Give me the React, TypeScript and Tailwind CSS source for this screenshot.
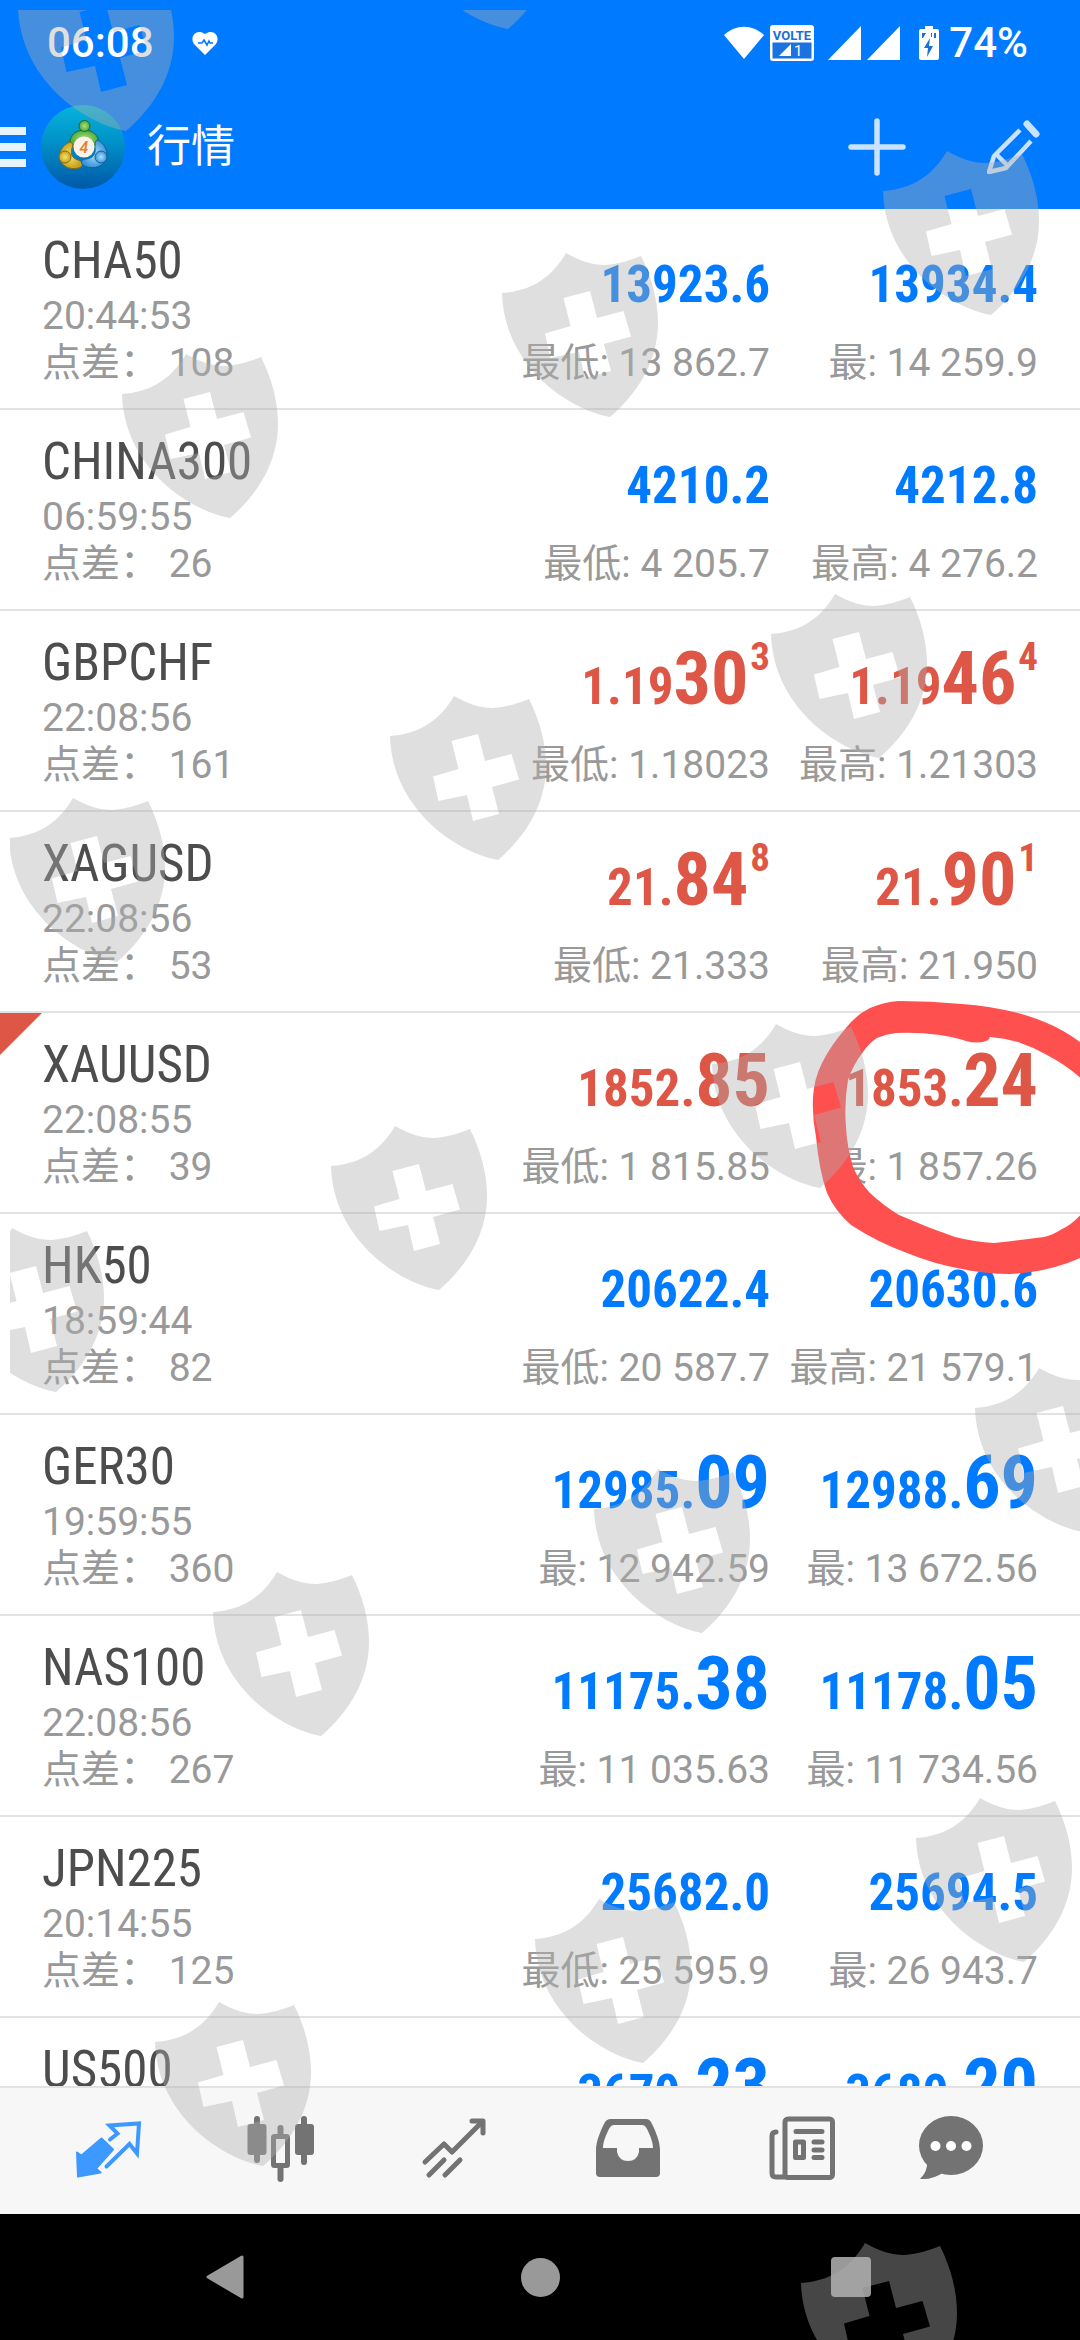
import type { ReactNode } from 'react';

type Price = { small: string; big?: string; sup?: string };

type Quote = {
  symbol: string;
  time?: string;
  spread?: string;
  bid: Price;
  ask: Price;
  low?: string;
  high?: string;
  down?: boolean;
  flagged?: boolean;
};

const quotes: Quote[] = [
  { symbol: 'CHA50', time: '20:44:53', spread: '108', bid: { small: '13923.6' }, ask: { small: '13934.4' }, low: '最低: 13 862.7', high: '最: 14 259.9' },
  { symbol: 'CHINA300', time: '06:59:55', spread: '26', bid: { small: '4210.2' }, ask: { small: '4212.8' }, low: '最低: 4 205.7', high: '最高: 4 276.2' },
  { symbol: 'GBPCHF', time: '22:08:56', spread: '161', bid: { small: '1.19', big: '30', sup: '3' }, ask: { small: '1.19', big: '46', sup: '4' }, low: '最低: 1.18023', high: '最高: 1.21303', down: true },
  { symbol: 'XAGUSD', time: '22:08:56', spread: '53', bid: { small: '21.', big: '84', sup: '8' }, ask: { small: '21.', big: '90', sup: '1' }, low: '最低: 21.333', high: '最高: 21.950', down: true },
  { symbol: 'XAUUSD', time: '22:08:55', spread: '39', bid: { small: '1852.', big: '85' }, ask: { small: '1853.', big: '24' }, low: '最低: 1 815.85', high: '最: 1 857.26', down: true, flagged: true },
  { symbol: 'HK50', time: '18:59:44', spread: '82', bid: { small: '20622.4' }, ask: { small: '20630.6' }, low: '最低: 20 587.7', high: '最高: 21 579.1' },
  { symbol: 'GER30', time: '19:59:55', spread: '360', bid: { small: '12985.', big: '09' }, ask: { small: '12988.', big: '69' }, low: '最: 12 942.59', high: '最: 13 672.56' },
  { symbol: 'NAS100', time: '22:08:56', spread: '267', bid: { small: '11175.', big: '38' }, ask: { small: '11178.', big: '05' }, low: '最: 11 035.63', high: '最: 11 734.56' },
  { symbol: 'JPN225', time: '20:14:55', spread: '125', bid: { small: '25682.0' }, ask: { small: '25694.5' }, low: '最低: 25 595.9', high: '最: 26 943.7' },
  { symbol: 'US500', bid: { small: '3679.', big: '23' }, ask: { small: '3680.', big: '20' } },
];

const shields = [
  [18, -33], [400, -135], [883, 151], [502, 253], [122, 354], [771, 594],
  [390, 696], [9, 798], [712, 1024], [331, 1126], [-52, 1228], [975, 1368],
  [594, 1469], [213, 1572], [535, 1899], [916, 1798], [155, 2002], [801, 2243],
];

function StatusBar() {
  return (
    <div className="flex h-[84px] items-center pl-[47px] pr-[52px] pt-[2px] text-[42px] font-medium leading-[48px]">
      <span>06:08</span>
      <svg className="ml-[38px] h-[24px] w-[26px]" viewBox="0 0 26 24" aria-hidden="true">
        <path d="M13 24 2 13C-3 5 5-3 13 3c8-6 16 2 11 10Z" fill="#fff" />
        <path d="M6 12h4l2-3 3 5 2-4 1 2h3" fill="none" stroke="#007aff" strokeWidth="1.6" />
      </svg>
      <div className="ml-auto flex items-center">
        <svg className="h-[34px] w-[40px]" viewBox="0 0 40 34" aria-hidden="true">
          <path d="M20 33 0 9C12-2 28-2 40 9Z" fill="#fff" />
        </svg>
        <svg className="ml-[6px] h-[36px] w-[44px]" viewBox="0 0 44 36" aria-hidden="true">
          <rect width="44" height="36" rx="3" fill="#fff" />
          <rect x="2.5" y="17.5" width="39" height="16" fill="#1a73e0" />
          <text x="22" y="14.5" textAnchor="middle" fontSize="13" fontWeight="700" fill="#1a6fd8">VOLTE</text>
          <path d="M9 31h12V19Z" fill="#fff" />
          <text x="24" y="31" fontSize="15" fontWeight="400" fill="#fff">1</text>
        </svg>
        <svg className="ml-[14px] h-[34px] w-[33px]" viewBox="0 0 33 34" aria-hidden="true">
          <path d="M0 34h33V0Z" fill="#fff" />
        </svg>
        <svg className="ml-[6px] h-[34px] w-[33px]" viewBox="0 0 33 34" aria-hidden="true">
          <path d="M0 34h33V0Z" fill="#fff" />
        </svg>
        <svg className="ml-[19px] h-[34px] w-[20px]" viewBox="0 0 20 34" aria-hidden="true">
          <path d="M6 0h8v3h4a2 2 0 0 1 2 2v27a2 2 0 0 1-2 2H2a2 2 0 0 1-2-2V5a2 2 0 0 1 2-2h4Z" fill="#fff" />
          <path d="M3 7h4l-3 5H3ZM12 7h1v4h-1ZM15 7h2v5h-2Z" fill="#1a6fd8" />
          <path d="M11 12 5 22h4l-1 9 6-11h-4Z" fill="#1a6fd8" />
        </svg>
        <span className="ml-[10px]">74%</span>
      </div>
    </div>
  );
}

function Logo() {
  return (
    <svg className="ml-[15px] h-[84px] w-[84px]" viewBox="0 0 84 84" aria-hidden="true">
      <defs>
        <linearGradient id="disc" x1="0" y1="0" x2="0" y2="1">
          <stop offset="0" stopColor="#08b4dc" />
          <stop offset="0.45" stopColor="#0090c8" />
          <stop offset="1" stopColor="#0058a8" />
        </linearGradient>
        <radialGradient id="green"><stop offset="0" stopColor="#b4e07c" /><stop offset="1" stopColor="#4aa83c" /></radialGradient>
        <radialGradient id="gold"><stop offset="0" stopColor="#f8e468" /><stop offset="1" stopColor="#c8a020" /></radialGradient>
        <radialGradient id="sky"><stop offset="0" stopColor="#a8e2ff" /><stop offset="1" stopColor="#3c94d8" /></radialGradient>
      </defs>
      <circle cx="42" cy="42" r="42" fill="url(#disc)" />
      <path d="M29 38c0-8 6-13 14-13s15 5 15 14c-1 5-5 5-7 2-4-6-12-6-16 0-2 3-6 1-6-3Z" fill="url(#green)" stroke="#1f6a24" />
      <path d="M29 37c-8 3-13 12-9 20 4 7 14 8 20 5 3-3 0-6-3-7-6-2-8-6-6-12 1-3 1-5-2-6Z" fill="url(#gold)" stroke="#8a6a10" />
      <path d="M57 35c7 4 11 12 8 20-4 8-16 10-23 5-3-3-1-6 3-6 7-1 10-5 9-11 0-4 0-8 3-8Z" fill="url(#sky)" stroke="#13609c" />
      <circle cx="43.5" cy="21" r="5.5" fill="url(#green)" stroke="#1f6a24" />
      <circle cx="24" cy="52" r="6" fill="url(#gold)" stroke="#8a6a10" />
      <circle cx="60" cy="52" r="6" fill="url(#sky)" stroke="#13609c" />
      <circle cx="43" cy="42" r="10.5" fill="#fbf3ea" />
      <text x="43" y="48" textAnchor="middle" fontSize="16" fontWeight="500" fontStyle="italic" fill="#ee7a2c">4</text>
    </svg>
  );
}

function Toolbar() {
  return (
    <div className="flex h-[125px] items-center pr-[40px]">
      <button type="button" aria-label="菜单" className="flex flex-col gap-[8px]">
        <span className="h-[8px] w-[26px] bg-[#e6f4ff]" />
        <span className="h-[8px] w-[26px] bg-[#e6f4ff]" />
        <span className="h-[8px] w-[26px] bg-[#e6f4ff]" />
      </button>
      <Logo />
      <h1 className="ml-[22px] text-[44px] leading-[64px]">行情</h1>
      <button type="button" aria-label="添加" className="ml-auto">
        <svg className="block h-[58px] w-[58px]" viewBox="0 0 58 58" fill="none" stroke="#c9e3ff" strokeWidth="5.5" strokeLinecap="round">
          <path d="M29 3v52M3 29h52" />
        </svg>
      </button>
      <button type="button" aria-label="编辑" className="ml-[81px]">
        <svg className="block h-[54px] w-[53px]" viewBox="0 0 53 54" fill="none" stroke="#c9e3ff" strokeWidth="4.5" strokeLinejoin="round">
          <path d="m40 4 9 10" strokeWidth="7" strokeLinecap="round" />
          <path d="M33 10 7 36 2 52l17-4 25-27" />
          <path d="m10 35 10 10" />
        </svg>
      </button>
    </div>
  );
}

function PriceText({ price, down }: { price: Price; down?: boolean }) {
  return (
    <div className={`mb-1 text-[51px] font-bold leading-[100px] whitespace-nowrap font-['Roboto_Condensed','Roboto',sans-serif] ${down ? 'text-[#de5646]' : 'text-[#007aff]'}`}>
      {price.small}
      {price.big && <span className="text-[74px] leading-none">{price.big}</span>}
      {price.sup && <span className="ml-[2px] align-[34px] text-[39px] leading-none">{price.sup}</span>}
    </div>
  );
}

function QuoteRow({ quote }: { quote: Quote }) {
  return (
    <li className="relative grid h-[201px] shrink-0 grid-cols-[1fr_268px_268px] border-b-2 border-[#e2e2e2] px-[42px]">
      {quote.flagged && (
        <svg className="absolute left-0 top-0 h-[42px] w-[42px]" viewBox="0 0 42 42" aria-hidden="true">
          <path d="M0 0h42L0 42Z" fill="#de5646" />
        </svg>
      )}
      <div className="pt-5 text-[39px] text-[#999]">
        <h2 className="text-[51px] leading-[64px] text-[#4d4d4d] font-['Roboto_Condensed','Roboto',sans-serif]">{quote.symbol}</h2>
        {quote.time && <p className="leading-[46px]">{quote.time}</p>}
        {quote.spread && <p className="leading-[48px]">点差： {quote.spread}</p>}
      </div>
      <div className="flex flex-col items-end pt-[26px]">
        <PriceText price={quote.bid} down={quote.down} />
        {quote.low && <p className="whitespace-nowrap text-[39px] leading-[48px] text-[#999]">{quote.low}</p>}
      </div>
      <div className="flex flex-col items-end pt-[26px]">
        <PriceText price={quote.ask} down={quote.down} />
        {quote.high && <p className="whitespace-nowrap text-[39px] leading-[48px] text-[#999]">{quote.high}</p>}
      </div>
    </li>
  );
}

function TabButton({ label, children }: { label: string; children: ReactNode }) {
  return (
    <button type="button" aria-label={label} className="flex items-center justify-center">
      <svg className="h-[72px] w-[72px]" viewBox="0 0 72 72" fill="none" strokeLinecap="round" strokeLinejoin="round">
        {children}
      </svg>
    </button>
  );
}

function TabBar() {
  return (
    <nav className="grid h-[128px] shrink-0 grid-cols-[173fr_173fr_173fr_173fr_173fr_128fr] border-t-2 border-[#e2e2e2] bg-[#f7f7f7] pl-[22px] pr-[65px]">
      <TabButton label="行情">
        <path d="M4 37.500l4.500 3L28.500 23.500 40 34.500 23 53.500l4.500 4L5 61.500Z" fill="#3d99ff" stroke="#3d99ff" strokeWidth="2" />
        <path d="m37 24.500 7.500-6L36.500 10.500 66 8.500 64 38.500 56.500 29 33.500 51.500" stroke="#3d99ff" strokeWidth="4" strokeLinejoin="miter" />
      </TabButton>
      <TabButton label="图表">
        <path d="M11 4v41M58 4v43" stroke="#737373" strokeWidth="6" />
        <rect x="1.5" y="9" width="19" height="31" rx="3" fill="#737373" />
        <rect x="49" y="9" width="19" height="31" rx="3" fill="#737373" />
        <path d="M34.500 13v51" stroke="#737373" strokeWidth="6" />
        <rect x="27.5" y="21.5" width="14" height="29" rx="1" fill="#f7f7f7" stroke="#737373" strokeWidth="5" />
      </TabButton>
      <TabButton label="交易">
        <path d="M6 47 25 29l8 8L63 7M53 6h11v12M10 60l15-15M26 60l15-15" stroke="#737373" strokeWidth="5" />
      </TabButton>
      <TabButton label="历史">
        <path
          fillRule="evenodd"
          fill="#737373"
          d="M19 4h35q4 0 6 5c4 8 8 18 8 26v23q0 4-4 4H8q-4 0-4-4V35c0-8 4-18 8-26q2-5 7-5ZM22 10q-3 0-5 4c-3 6-6 13-6 19h14v4q2 9 11 9t11-9v-4h14c0-6-3-13-6-19q-2-4-5-4Z"
        />
      </TabButton>
      <TabButton label="新闻">
        <rect x="20" y="4" width="47.5" height="58.5" rx="3" stroke="#737373" strokeWidth="5" />
        <path d="M11 17q-4 0-4 4v37q0 4 4 4h9" stroke="#737373" strokeWidth="5" />
        <path d="M31 16.500h26M49 27h8M49 35h8M49 42.500h8" stroke="#737373" strokeWidth="5" />
        <rect x="30.5" y="27" width="8" height="15.5" stroke="#737373" strokeWidth="5" />
      </TabButton>
      <TabButton label="聊天">
        <ellipse cx="36" cy="30.5" rx="32" ry="29.5" fill="#737373" />
        <path d="M12 47q1 9-7 17 13 1 24-7Z" fill="#737373" />
        <circle cx="20.5" cy="31" r="5" fill="#fff" />
        <circle cx="36" cy="31" r="5" fill="#fff" />
        <circle cx="51.5" cy="31" r="5" fill="#fff" />
      </TabButton>
    </nav>
  );
}

function SystemNav() {
  return (
    <div className="flex h-[126px] shrink-0 items-center justify-between bg-black px-[185px]">
      <button type="button" aria-label="返回" className="flex w-[80px] justify-center">
        <svg className="h-[44px] w-[40px]" viewBox="0 0 40 44">
          <path d="M3 22 37 2v40Z" fill="#999" stroke="#999" strokeWidth="3" strokeLinejoin="round" />
        </svg>
      </button>
      <button type="button" aria-label="主屏幕" className="flex w-[80px] justify-center">
        <span className="h-[39px] w-[39px] rounded-full bg-[#999]" />
      </button>
      <button type="button" aria-label="最近任务" className="flex w-[80px] justify-center pr-2">
        <span className="h-[40px] w-[40px] rounded-[4px] bg-[#999]" />
      </button>
    </div>
  );
}

// Hand-drawn marker and shield stamps lying over the whole screen
function Overlay() {
  return (
    <svg className="pointer-events-none absolute inset-0 h-full w-full" aria-hidden="true">
      <defs>
        <clipPath id="stamps">
          <rect x="10" y="10" width="100%" height="100%" />
        </clipPath>
        <path
          id="shield"
          fillRule="evenodd"
          d="M64 0C78 8 90 12 103 12C117 11 129 7 139 3C150 25 156 48 156 70C156 108 136 140 108 164C62 155 2 110 0 40C30 38 50 24 64 0ZM61.500 45L88 38L95 65L121.500 58L129 83.500L102 91L109 118L83 125L77 99L48.500 105L43 80.500L68.500 73Z"
        />
      </defs>
      <path
        fill="#ff5050"
        d="M1084 1045Q1066 1031 1047 1023Q1033 1017 1018 1013Q990 1006 962 1004Q930 1001 899 1001Q884 1002 870 1008Q856 1015 846 1028Q831 1045 822 1063Q814 1079 813 1097Q812 1117 816 1137Q819 1170 827 1193Q835 1211 851 1225Q877 1242 907 1253Q934 1264 962 1269Q986 1274 1010 1274Q1034 1273 1055 1267Q1070 1263 1084 1256V1211Q1073 1224 1062 1229Q1055 1234 1044 1237Q1020 1240 994 1243Q975 1242 955 1237Q926 1227 899 1215Q884 1206 870 1193Q859 1181 853 1167Q847 1147 846 1127Q844 1103 848 1080Q853 1065 863 1052Q869 1043 877 1038Q886 1034 896 1033Q918 1032 940 1035Q958 1038 966 1041Q977 1044 986 1041Q989 1040 990 1037Q1004 1038 1018 1042Q1033 1047 1047 1055Q1068 1066 1084 1081Z"
      />
      <g clipPath="url(#stamps)" fill="#afafaf" opacity="0.4">
        {shields.map(([x, y]) => (
          <use key={`${x}-${y}`} href="#shield" x={x} y={y} />
        ))}
      </g>
    </svg>
  );
}

export default function App() {
  return (
    <div className="relative flex h-screen flex-col overflow-hidden bg-white font-['Roboto','Noto_Sans_CJK_SC',sans-serif]">
      <header className="shrink-0 bg-[#007aff] text-white">
        <StatusBar />
        <Toolbar />
      </header>
      <main className="min-h-0 flex-1 overflow-hidden">
        <ul className="flex flex-col">
          {quotes.map((quote) => (
            <QuoteRow key={quote.symbol} quote={quote} />
          ))}
        </ul>
      </main>
      <TabBar />
      <SystemNav />
      <Overlay />
    </div>
  );
}
